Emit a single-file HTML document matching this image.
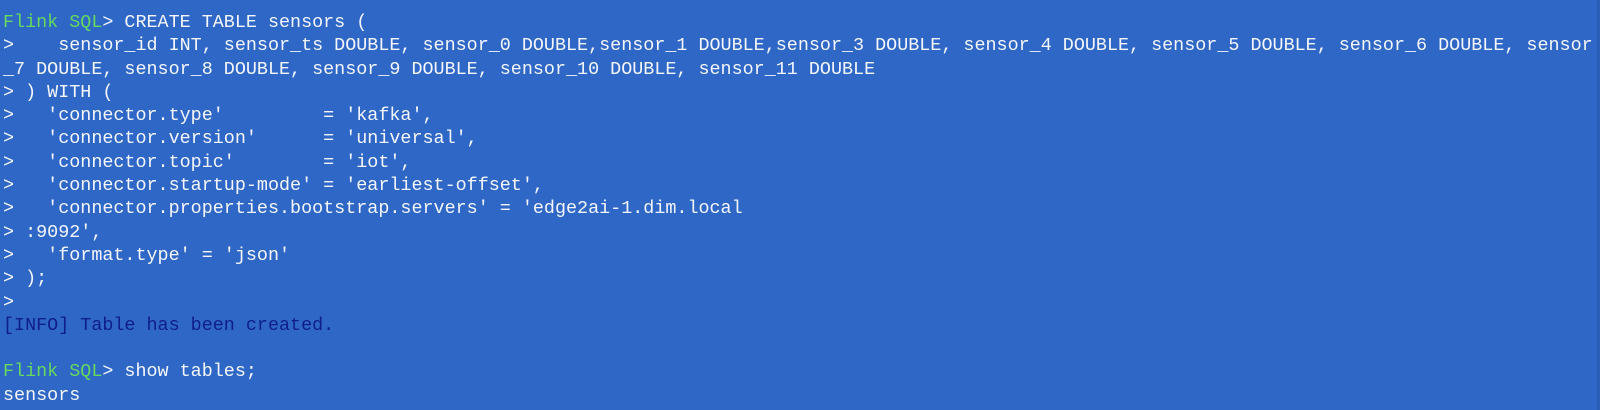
<!DOCTYPE html>
<html><head><meta charset="utf-8"><style>
html,body{margin:0;padding:0;}
html{overflow:hidden;height:410px;}
body{width:1600px;height:410px;overflow:hidden;background:#2e67c5;position:relative;}
.t{position:absolute;left:3px;top:12px;font-family:"Liberation Mono",monospace;font-size:18px;color:#f4f6fb;transform:scaleX(1.022);transform-origin:0 0;width:1700px;}
.t div{height:23.3px;line-height:23.3px;white-space:pre;}
.g{color:#66d95e}.i{color:#0f1e8c}
.sb{position:absolute;left:1597px;top:0;width:3px;height:410px;background:#2a5db5;}
</style></head><body>
<div class="t"><div><span class="g">Flink SQL</span>&gt; CREATE TABLE sensors (</div><div>&gt;    sensor_id INT, sensor_ts DOUBLE, sensor_0 DOUBLE,sensor_1 DOUBLE,sensor_3 DOUBLE, sensor_4 DOUBLE, sensor_5 DOUBLE, sensor_6 DOUBLE, sensor</div><div>_7 DOUBLE, sensor_8 DOUBLE, sensor_9 DOUBLE, sensor_10 DOUBLE, sensor_11 DOUBLE</div><div>&gt; ) WITH (</div><div>&gt;   'connector.type'         = 'kafka',</div><div>&gt;   'connector.version'      = 'universal',</div><div>&gt;   'connector.topic'        = 'iot',</div><div>&gt;   'connector.startup-mode' = 'earliest-offset',</div><div>&gt;   'connector.properties.bootstrap.servers' = 'edge2ai-1.dim.local</div><div>&gt; :9092',</div><div>&gt;   'format.type' = 'json'</div><div>&gt; );</div><div>&gt;</div><div><span class="i">[INFO] Table has been created.</span></div><div> </div><div><span class="g">Flink SQL</span>&gt; show tables;</div><div>sensors</div></div>
<div class="sb"></div>
</body></html>
